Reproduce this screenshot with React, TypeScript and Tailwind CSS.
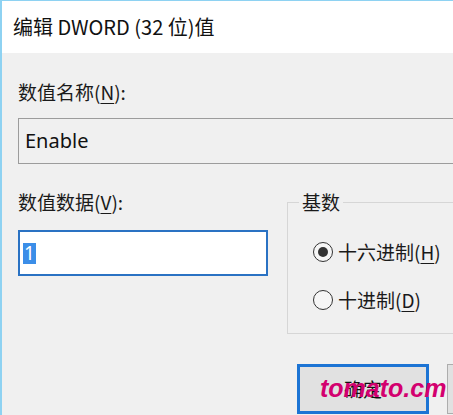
const ui = { fontFamily: '"Noto Sans", "Noto Sans CJK SC", sans-serif' };
const cjk = { fontFamily: '"Noto Sans CJK SC", "Noto Sans", sans-serif' };

function Radio({ checked, label, accel }: { checked?: boolean; label: string; accel: string }) {
  return (
    <label className="flex h-[24px] items-center gap-[5px]">
      <span className="flex h-[20px] w-[20px] items-center justify-center rounded-full border-[1.5px] border-[#333] bg-[#f6f6f6]">
        {checked && <span className="h-[10px] w-[10px] rounded-full bg-[#333]" />}
      </span>
      <span className="text-[19px] leading-[24px] text-[#1a1a1a]" style={cjk}>
        {label}(<span className="underline underline-offset-[3px]">{accel}</span>)
      </span>
    </label>
  );
}

export default function App() {
  return (
    <div className="relative h-[415px] w-[453px] overflow-hidden border-l-2 border-t border-[#8ed2f2] bg-[#f0f0f0]" style={ui}>
      {/* Title bar */}
      <div className="flex h-[52px] items-center bg-white pl-[11px] text-[20px] text-[#111]" style={cjk}>
        编辑 DWORD (32 位)值
      </div>

      <div className="w-[620px] pl-[16px]">
        <div className="mt-[27px] text-[19px] leading-[24px] text-[#1a1a1a]" style={cjk}>
          数值名称(<span className="underline underline-offset-[3px]">N</span>):
        </div>
        <div className="mt-[14px] flex h-[46px] w-[480px] items-center border border-[#9c9c9c] bg-[#f0f0f0] pl-[6px] text-[20px] text-[#111]">
          Enable
        </div>

        <div className="mt-[26px] flex">
          <div className="w-[269px] shrink-0">
            <div className="text-[19px] leading-[24px] text-[#1a1a1a]" style={cjk}>
              数值数据(<span className="underline underline-offset-[3px]">V</span>):
            </div>
            <div className="mt-[16px] flex h-[46px] w-[250px] items-center border-2 border-[#2a72c3] bg-white pl-[3px]">
              <span className="flex h-[21px] w-[13px] items-center justify-center bg-[#3b8ee8] text-[19px] text-white">1</span>
            </div>
          </div>

          <div className="shrink-0">
            <fieldset className="w-[200px] border border-[#d6d6d6] px-[11px] pb-[21px]">
              <legend className="px-[3px] text-[19px] leading-[24px] text-[#1a1a1a]" style={cjk}>
                基数
              </legend>
              <div className="mt-[26px] flex flex-col gap-[24px] pl-[14px]">
                <Radio checked label="十六进制" accel="H" />
                <Radio label="十进制" accel="D" />
              </div>
            </fieldset>

            <div className="ml-[10px] mt-[30px] flex gap-[18px]">
              <div className="flex h-[50px] w-[132px] items-center justify-center border-[3px] border-[#1c74d4] bg-[#e1e1e1] text-[19px] text-[#111]" style={cjk}>
                确定
              </div>
              <div className="h-[50px] w-[132px] border border-[#adadad] bg-[#e1e1e1]" />
            </div>
          </div>
        </div>
      </div>

      {/* watermark */}
      <div
        className="absolute left-[318px] top-[372px] text-[25px] font-bold italic leading-[30px] text-[#d3006f]"
        style={{ fontFamily: '"Liberation Sans", Arial, sans-serif' }}
      >
        tomato.cm
      </div>
    </div>
  );
}
